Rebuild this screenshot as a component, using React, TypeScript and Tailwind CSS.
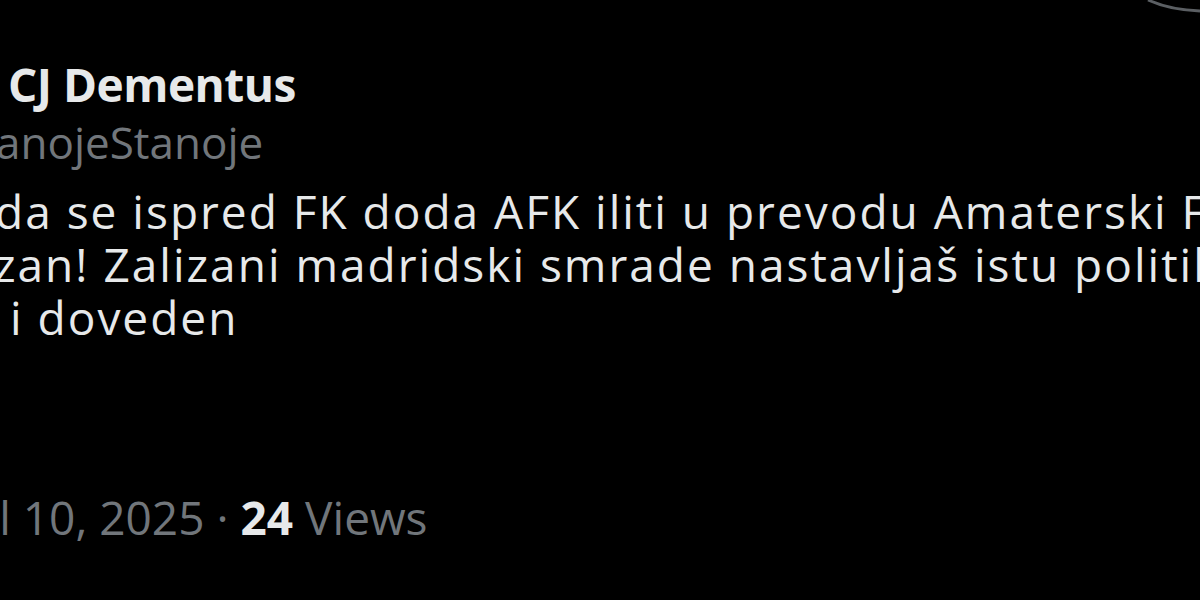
export default function App() {
  return (
    <div className="relative h-[600px] w-[1200px] overflow-hidden bg-black text-[#e7e9ea] [font-family:'Open_Sans',sans-serif]">
      {/* corner of the menu / logo that is cut off */}
      <svg className="absolute right-0 top-0" width="70" height="14" viewBox="0 0 70 14">
        <path d="M18 0 Q40 10 70 11" stroke="#5b5f63" strokeWidth="3" fill="none" />
      </svg>

      <div className="flex flex-col pt-[58px]">
        <div className="pl-[8px] text-[46px] font-bold leading-[52px] tracking-[-0.5px]">CJ Dementus</div>
        <div className="-ml-[4px] mt-[6px] text-[44px] leading-[52px] text-[#71767b]">anojeStanoje</div>

        <div className="mt-[17px] flex flex-col whitespace-nowrap text-[46px] leading-[53px] tracking-[2px]">
          <div className="-ml-[5px]">da se ispred FK doda AFK iliti u prevodu Amaterski Fudbalski</div>
          <div className="-ml-[6px]">zan! Zalizani madridski smrade nastavljaš istu politiku</div>
          <div className="pl-[10px]">i doveden</div>
        </div>

        <div className="mt-[147px] whitespace-nowrap text-[46px] leading-[52px] text-[#71767b]">
          <span className="-ml-[29px] inline-block">ul 10, 2025</span>
          <span className="mx-[12px]">·</span>
          <span className="font-bold text-[#e7e9ea]">24</span>
          <span> Views</span>
        </div>
      </div>
    </div>
  );
}
